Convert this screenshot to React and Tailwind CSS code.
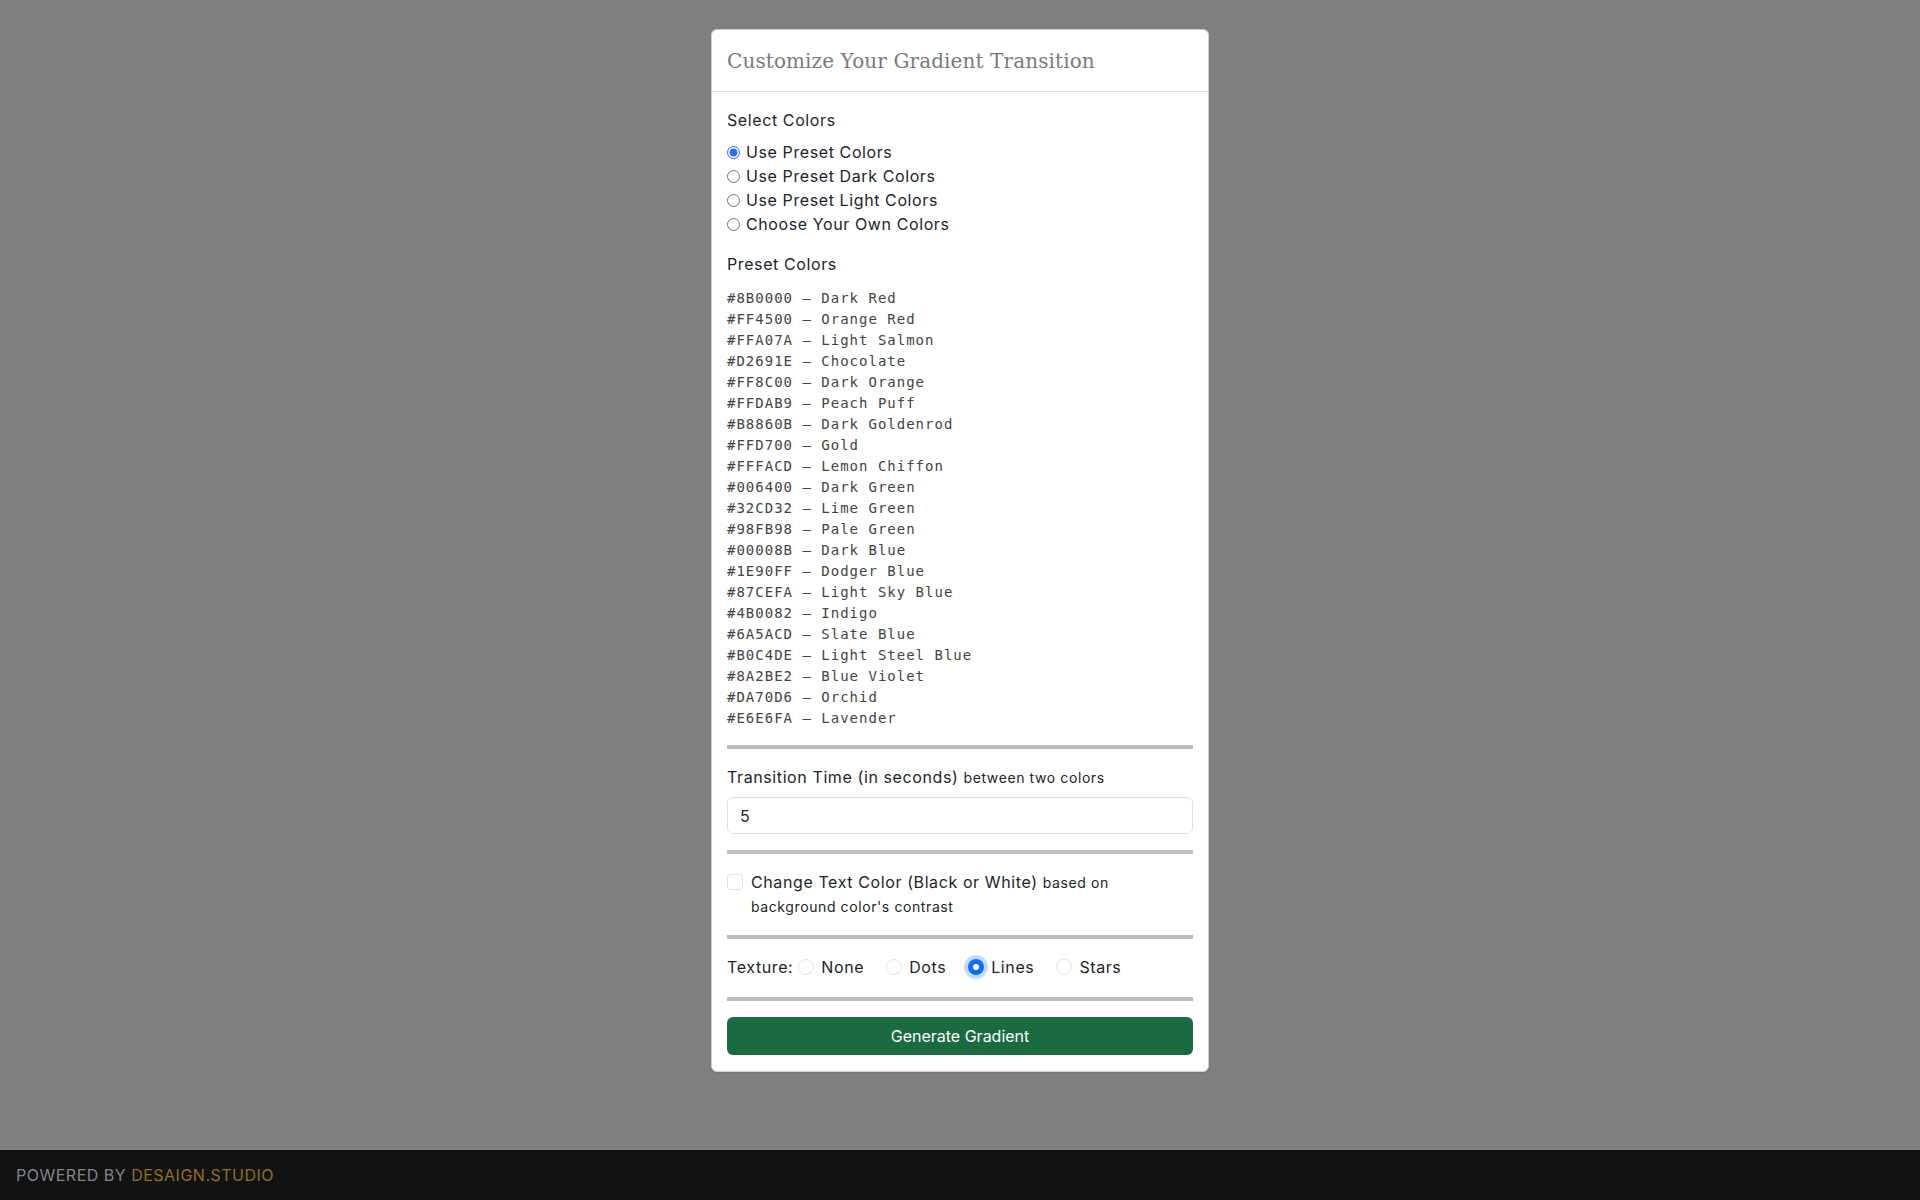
import { useState } from "react";

const PRESETS = [
    ["#8B0000", "Dark Red"],
    ["#FF4500", "Orange Red"],
    ["#FFA07A", "Light Salmon"],
    ["#D2691E", "Chocolate"],
    ["#FF8C00", "Dark Orange"],
    ["#FFDAB9", "Peach Puff"],
    ["#B8860B", "Dark Goldenrod"],
    ["#FFD700", "Gold"],
    ["#FFFACD", "Lemon Chiffon"],
    ["#006400", "Dark Green"],
    ["#32CD32", "Lime Green"],
    ["#98FB98", "Pale Green"],
    ["#00008B", "Dark Blue"],
    ["#1E90FF", "Dodger Blue"],
    ["#87CEFA", "Light Sky Blue"],
    ["#4B0082", "Indigo"],
    ["#6A5ACD", "Slate Blue"],
    ["#B0C4DE", "Light Steel Blue"],
    ["#8A2BE2", "Blue Violet"],
    ["#DA70D6", "Orchid"],
    ["#E6E6FA", "Lavender"],
];

const COLOR_MODES = [
    "Use Preset Colors",
    "Use Preset Dark Colors",
    "Use Preset Light Colors",
    "Choose Your Own Colors",
];

const TEXTURES = ["None", "Dots", "Lines", "Stars"];

function Divider() {
    return <div className="h-1 w-full bg-[#bdbdbd] shrink-0"></div>;
}

export default function App() {
    const [mode, setMode] = useState(0);
    const [seconds, setSeconds] = useState("5");
    const [contrast, setContrast] = useState(false);
    const [texture, setTexture] = useState("Lines");

    return (
        <div className="flex flex-col min-h-screen w-full bg-[#808080] text-[#212529] font-['Inter','Noto_Sans',sans-serif]">
            <div className="flex justify-center pt-[29px]">
                <div className="w-[498px] bg-white rounded-md border border-[#d0d0d0] shadow-sm">
                    <div className="h-[62px] px-[15px] flex items-center border-b border-[#dee2e6]">
                        <h1 className="text-[20px] font-['DejaVu_Serif',serif] font-light text-[#7a7a7a] tracking-[0.1px]">
                            Customize Your Gradient Transition
                        </h1>
                    </div>

                    <div className="flex flex-col px-[15px] pt-4 pb-4 text-base tracking-[0.6px]">
                        <div className="h-6 leading-6 mb-2">Select Colors</div>
                        <div className="flex flex-col">
                            {COLOR_MODES.map((m, i) => (
                                <label key={m} className="flex items-center leading-6 h-6">
                                    <input
                                        type="radio"
                                        name="mode"
                                        checked={mode === i}
                                        onChange={() => setMode(i)}
                                        className="w-[13px] h-[13px] m-0 mr-[6px] accent-[#2f6bff]"
                                    />
                                    {m}
                                </label>
                            ))}
                        </div>

                        <div className="h-6 leading-6 mt-4">Preset Colors</div>
                        <div className="mt-3 mb-4 font-['DejaVu_Sans_Mono',monospace] text-[14px] leading-[21px] tracking-[1px] text-[#444]">
                            {PRESETS.map(([hex, name]) => (
                                <div key={hex}>{hex} – {name}</div>
                            ))}
                        </div>

                        <Divider />

                        <div className="h-6 leading-6 mt-4 flex items-baseline">
                            <span>Transition Time (in seconds)&nbsp;</span>
                            <span className="text-[14px]">between two colors</span>
                        </div>
                        <input
                            type="text"
                            value={seconds}
                            onChange={(e) => setSeconds(e.target.value)}
                            className="mt-2 mb-4 h-[37px] w-full px-3 border border-[#dee2e6] rounded-md text-base outline-none"
                        />

                        <Divider />

                        <div className="flex items-start mt-4 mb-4 cursor-pointer" onClick={() => setContrast(!contrast)}>
                            <span className={`mt-[4px] mr-2 w-4 h-4 shrink-0 rounded border ${contrast ? "bg-[#0d6efd] border-[#0d6efd]" : "border-[#dee2e6] bg-white"}`}></span>
                            <div className="flex flex-col">
                                <div className="h-6 leading-6 flex items-baseline">
                                    <span>Change Text Color (Black or White)&nbsp;</span>
                                    <span className="text-[14px]">based on</span>
                                </div>
                                <div className="h-6 leading-6 text-[14px] mt-[1px]">background color's contrast</div>
                            </div>
                        </div>

                        <Divider />

                        <div className="flex items-center h-6 mt-4 mb-[18px]">
                            <span className="mr-[5px]">Texture:</span>
                            {TEXTURES.map((t) => (
                                <label key={t} className="flex items-center mr-[22px] cursor-pointer" onClick={() => setTexture(t)}>
                                    {texture === t ? (
                                        <span className="w-4 h-4 rounded-full bg-[#0d6efd] ring-4 ring-[#0d6efd]/25 flex items-center justify-center">
                                            <span className="w-[6px] h-[6px] rounded-full bg-white"></span>
                                        </span>
                                    ) : (
                                        <span className="w-4 h-4 rounded-full border border-[#dee2e6] bg-white"></span>
                                    )}
                                    <span className="ml-[7px]">{t}</span>
                                </label>
                            ))}
                        </div>

                        <Divider />

                        <button type="button" className="mt-4 h-[38px] w-full rounded-md bg-[#1a6b42] text-white text-base tracking-normal">
                            Generate Gradient
                        </button>
                    </div>
                </div>
            </div>

            <footer className="mt-auto h-[50px] bg-[#111214] flex items-center px-4 text-[16px] tracking-[0.5px] uppercase">
                <span className="text-[#858585]">Powered by&nbsp;</span>
                <span className="text-[#93701b]">Desaign.studio</span>
            </footer>
        </div>
    );
}
